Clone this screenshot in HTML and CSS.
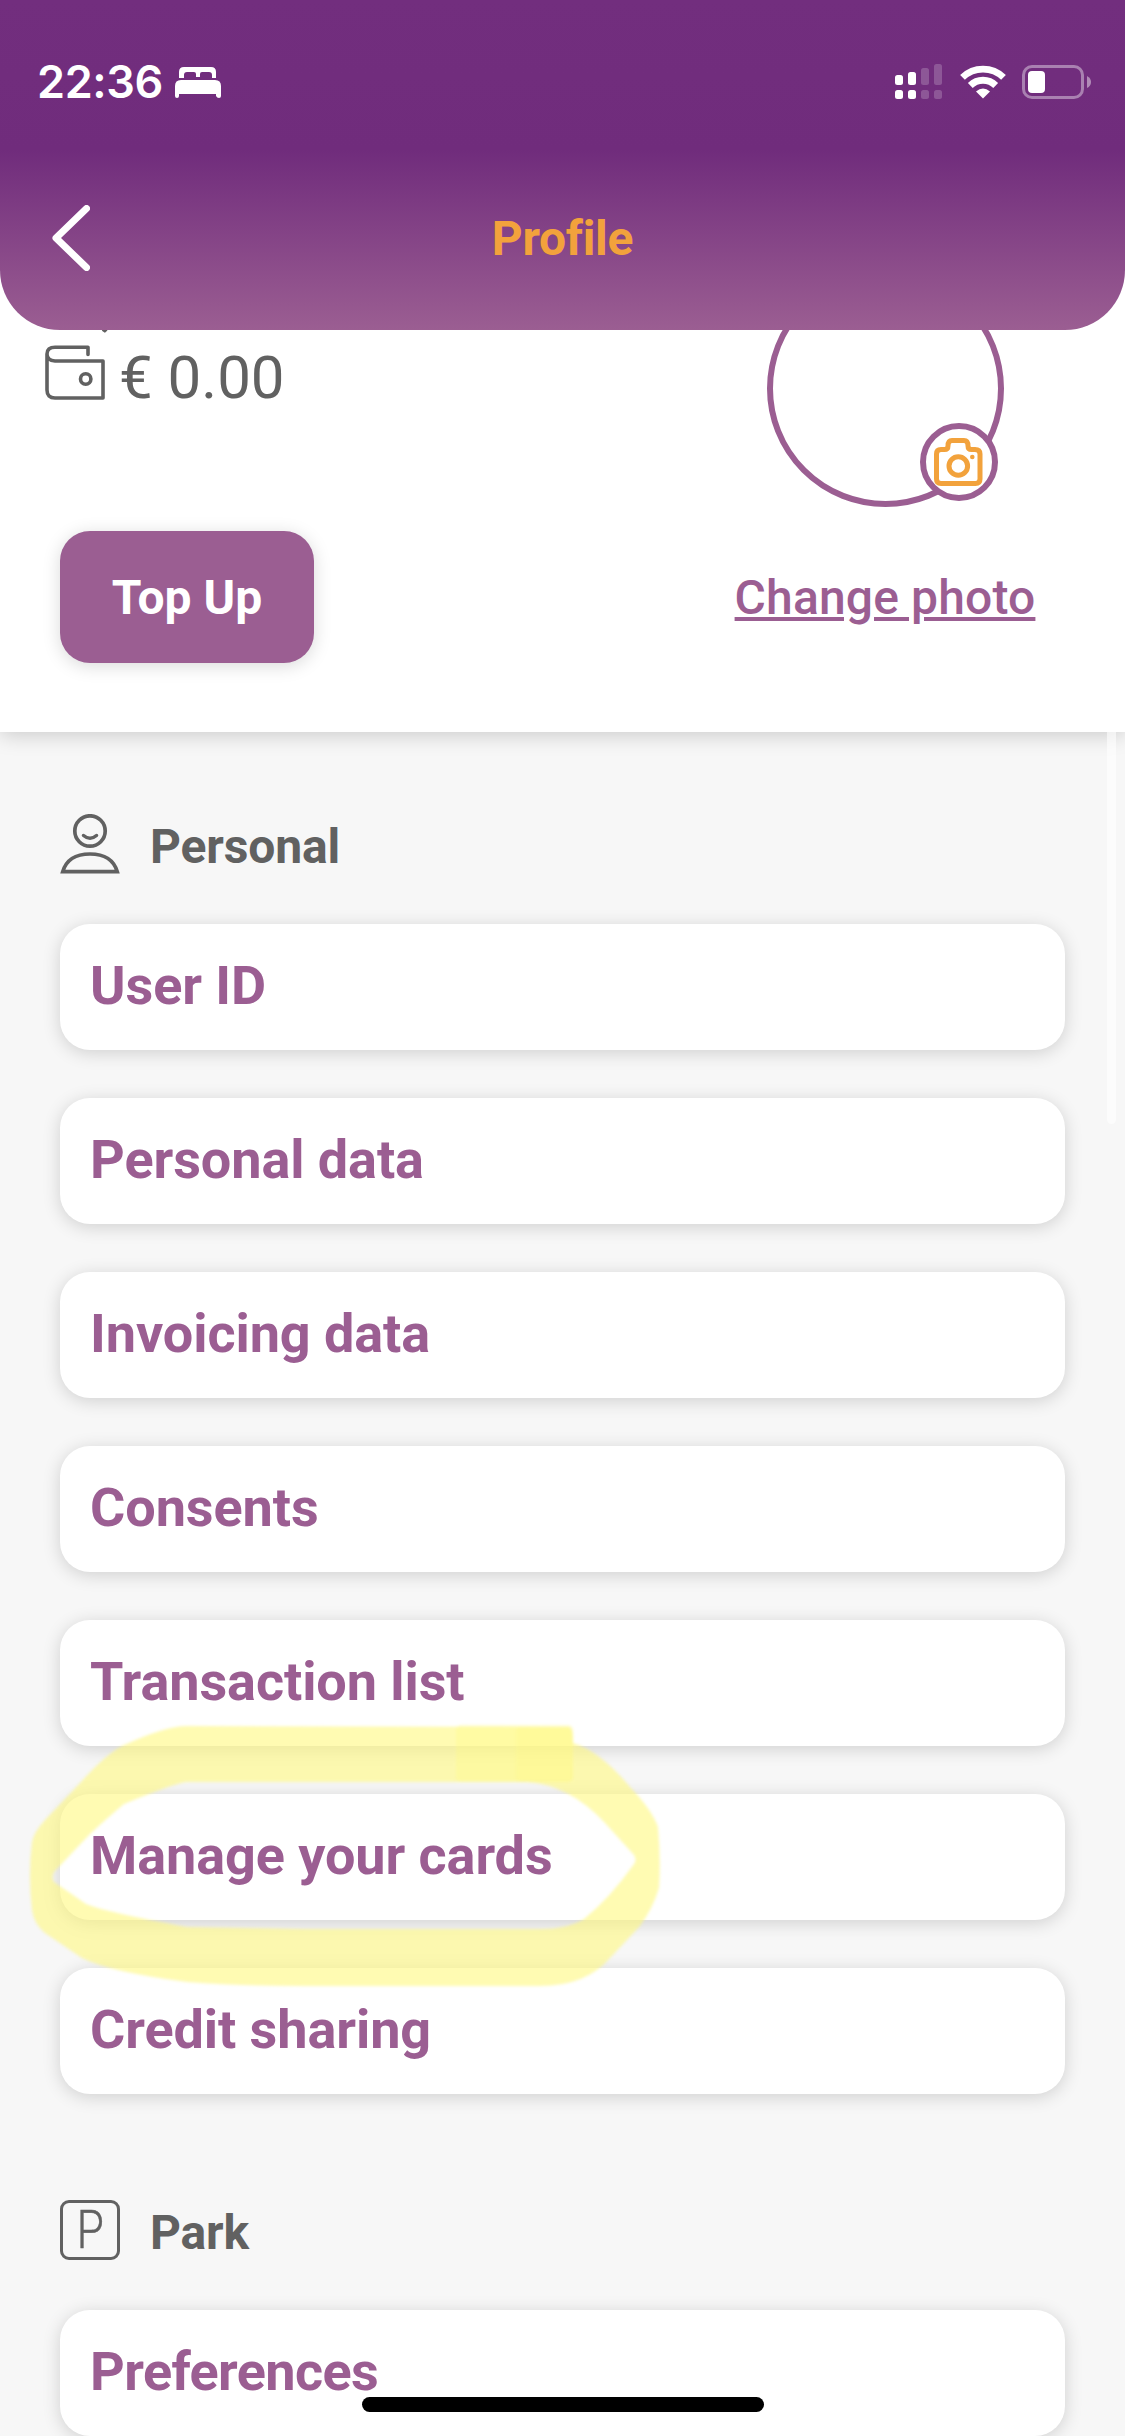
FILE: index.html
```html
<!DOCTYPE html>
<html lang="en">
<head>
<meta charset="utf-8">
<title>Profile</title>
<link rel="stylesheet" href="styles.css">
</head>
<body>
<div class="screen">
  <header class="header">
    <div class="status">
      <div class="status-left">
        <span class="time">22:36</span>
        <svg class="bed" width="46" height="32" viewBox="0 0 46 32" fill="#fff"><path d="M4 11V5Q4 0 9 0H36Q41 0 41 5V11H37V8Q37 5 34 5H27Q25 5 25 7V10H21V7Q21 5 19 5H12Q9 5 9 8V11Z"/><path d="M0 19Q0 13 6 13H40Q46 13 46 19V29Q46 31 44 31T41 29V27H4V29Q4 31 2 31T0 29Z"/></svg>
      </div>
      <div class="status-right">
        <svg width="47" height="36" viewBox="0 0 47 36" fill="#fff"><rect y="11" width="8" height="10" rx="2.5"/><rect x="13" y="8" width="8" height="13" rx="2.5"/><rect y="26" width="8" height="9" rx="2.5"/><rect x="13" y="26" width="8" height="9" rx="2.5"/><g opacity=".2"><rect x="26" y="4" width="8" height="17" rx="2.5"/><rect x="39" y="0" width="8" height="21" rx="2.5"/><rect x="26" y="26" width="8" height="9" rx="2.5"/><rect x="39" y="26" width="8" height="9" rx="2.5"/></g></svg>
        <svg class="wifi" width="46" height="34" viewBox="0 0 46 34" fill="none" stroke="#fff" stroke-width="6.8"><path d="M2.500 12.400A29.500 29.500 0 0 1 43.500 12.400"/><path d="M10.300 20.500A18 18 0 0 1 35.700 20.500"/><path d="M23 33.500L16 26.500Q23 20.500 30 26.500Z" fill="#fff" stroke="none"/></svg>
        <svg class="battery" width="70" height="34" viewBox="0 0 70 34"><rect x="1.500" y="1.500" width="59" height="31" rx="8.500" fill="none" stroke="#fff" stroke-opacity=".4" stroke-width="3"/><rect x="6" y="6" width="17" height="22" rx="4" fill="#fff"/><path d="M65 11Q69 13 69 17T65 23Z" fill="#fff" fill-opacity=".45"/></svg>
      </div>
    </div>
    <div class="navbar">
      <svg class="back" width="38" height="66" viewBox="0 0 38 66" fill="none" stroke="#fff" stroke-width="7" stroke-linecap="round" stroke-linejoin="round"><path d="M34.500 3.500L4 33L34.500 62.500"/></svg>
      <h1 class="title">Profile</h1>
      <span></span>
    </div>
  </header>

  <section class="profile">
    <div class="account">
      <div class="greeting">,</div>
      <div class="balance">
        <svg width="60" height="56" viewBox="0 0 60 56" fill="none" stroke="#616161" stroke-width="3.600" stroke-linejoin="round" stroke-linecap="round"><path d="M43 9.500V2.300H10Q2 2.300 2 9T10 16H58V53H10Q2 53 2 45V9"/><circle cx="40.700" cy="34" r="5.200"/></svg>
        <span class="amount">€ 0.00</span>
      </div>
      <button class="topup">Top Up</button>
    </div>
    <div class="photo">
      <div class="avatar">
        <div class="camera">
          <svg width="49" height="49" viewBox="0 0 49 49" fill="none" stroke="#f2a23c" stroke-width="5" stroke-linejoin="round"><path d="M2.500 16Q2.500 11.500 7 11.500H10.500Q14 11.500 14 8Q14 2.500 18 2.500H30Q34 2.500 34 8Q34 11.500 37.500 11.500H41Q46 11.500 46 16V41Q46 45.500 41.500 45.500H7Q2.500 45.500 2.500 41Z"/><circle cx="24.300" cy="28" r="9.300"/><circle cx="38.300" cy="19" r="2.300" fill="#f2a23c" stroke="none"/></svg>
        </div>
      </div>
      <a class="change">Change photo</a>
    </div>
  </section>

  <main class="content">
    <section class="group">
      <h2 class="heading">
        <svg width="60" height="60" viewBox="0 0 60 60" fill="none" stroke="#616161" stroke-width="3.700" stroke-linecap="round"><circle cx="30" cy="17" r="15.200"/><path d="M23.500 21.500Q30 27 36.500 21.500" stroke-width="3.500"/><path d="M2.700 57.700Q8 40 30 40T57.300 57.700Z" stroke-linecap="butt"/></svg>
        <span>Personal</span>
      </h2>
      <ul class="list">
        <li class="item">User ID</li>
        <li class="item">Personal data</li>
        <li class="item">Invoicing data</li>
        <li class="item">Consents</li>
        <li class="item">Transaction list</li>
        <li class="item">Manage your cards</li>
        <li class="item">Credit sharing</li>
      </ul>
    </section>
    <section class="group">
      <h2 class="heading">
        <i class="parking"><b class="parking-letter">P</b></i>
        <span>Park</span>
      </h2>
      <ul class="list">
        <li class="item tight">Preferences</li>
      </ul>
    </section>
  </main>

  <svg class="marker" width="660" height="290" viewBox="10 1710 660 290" fill="#fff97f">
    <path fill-rule="evenodd" opacity=".6" d="M187 1726L569 1727Q573 1729 573 1743Q600 1751 630 1787Q652 1810 658 1827Q661 1860 659 1888Q653 1908 640 1926L610 1958Q586 1986 540 1986H304Q240 1986 187 1982Q110 1972 82 1958L45 1933Q34 1924 32 1910Q28 1875 32 1842Q34 1832 45 1820L80 1783Q105 1755 122 1746Q165 1726 187 1726ZM187 1782Q175 1783 124 1804Q105 1820 90 1834L54 1872Q51 1878 54 1882L86 1904Q105 1912 187 1927L304 1929H540Q568 1929 584 1919Q610 1898 634 1864Q637 1860 634 1855L605 1823Q570 1785 527 1782Z"/>
    <rect x="456" y="1725" width="117" height="57" rx="5" opacity=".3"/>
    <rect x="516" y="1727" width="57" height="55" rx="5" opacity=".25"/>
  </svg>
  <div class="scrollbar"></div>
  <div class="home"></div>
</div>
</body>
</html>
```
FILE: styles.css
```css
* { box-sizing: border-box; }

body {
  margin: 0;
  font-family: Roboto, "Liberation Sans", sans-serif;
  background: #f7f7f7;
}

h1, h2, ul { margin: 0; padding: 0; }

svg { display: block; flex: none; }

.screen {
  position: relative;
  width: 1125px;
  height: 2436px;
  overflow: hidden;
  background: #f7f7f7;
}

.header {
  position: relative;
  z-index: 2;
  height: 330px;
  border-radius: 0 0 60px 60px;
  background: linear-gradient(#722e7e 0, #702c7c 150px, #9b5e92 330px);
}

.status {
  display: flex;
  justify-content: space-between;
  height: 150px;
  padding: 64px 33px 0 37px;
}

.status-left, .status-right { display: flex; align-items: flex-start; }

.time {
  width: 138px;
  margin-top: -10px;
  font: 600 45px/56px Inter, sans-serif;
  letter-spacing: -.4px;
  color: #fff;
  white-space: nowrap;
}

.bed { margin-top: 3px; }
.wifi { margin: 1px 0 0 18px; }
.battery { margin: 1px 0 0 16px; }

.navbar {
  display: grid;
  grid-template-columns: 1fr auto 1fr;
  align-items: center;
  height: 176px;
  padding: 0 52px;
}

.title {
  font-size: 48px;
  font-weight: bold;
  letter-spacing: -.3px;
  color: #f2a23c;
}

.profile {
  position: relative;
  z-index: 1;
  display: flex;
  justify-content: space-between;
  height: 462px;
  margin-top: -60px;
  background: #fff;
  box-shadow: 0 3px 20px rgba(0, 0, 0, .18);
}

.account {
  display: flex;
  flex-direction: column;
  align-items: flex-start;
  padding-left: 45px;
  color: #616161;
  font-size: 60px;
}

.greeting { height: 70px; padding-left: 56px; line-height: 68px; }

.balance {
  display: flex;
  align-items: center;
  gap: 14px;
  height: 66px;
}

.amount { padding-top: 9px; }

.topup {
  width: 254px;
  height: 132px;
  margin: 125px 0 0 15px;
  border: 0;
  border-radius: 30px;
  background: #9b5e92;
  box-shadow: 0 3px 18px rgba(0, 0, 0, .15);
  font: bold 48px Roboto, sans-serif;
  color: #fff;
}

.photo {
  display: flex;
  flex-direction: column;
  align-items: center;
  width: 300px;
  margin-right: 90px;
}

.avatar {
  position: relative;
  width: 237px;
  height: 237px;
  border: 6px solid #9b5e92;
  border-radius: 50%;
}

.camera {
  position: absolute;
  right: 0;
  bottom: 0;
  display: flex;
  align-items: center;
  justify-content: center;
  width: 78px;
  height: 78px;
  border: 6px solid #9b5e92;
  border-radius: 50%;
  background: #fff;
}

.change {
  margin-top: 63px;
  font-size: 48px;
  font-weight: 500;
  letter-spacing: .15px;
  line-height: 56px;
  color: #9b5e92;
  text-decoration: underline;
  white-space: nowrap;
}

.content {
  display: flex;
  flex-direction: column;
  gap: 106px;
  padding: 82px 60px 0;
}

.heading {
  display: flex;
  gap: 30px;
  height: 60px;
  margin-bottom: 50px;
  font-size: 48px;
  font-weight: bold;
  letter-spacing: -.15px;
  line-height: 66px;
  color: #616161;
}

.parking {
  display: flex;
  justify-content: center;
  width: 60px;
  height: 60px;
  border: 3px solid #616161;
  border-radius: 9px;
  font-style: normal;
}

.parking-letter {
  font-size: 53px;
  font-weight: 300;
  line-height: 54px;
  transform: scaleX(.83);
  -webkit-text-stroke: .5px #616161;
}

.list {
  display: flex;
  flex-direction: column;
  gap: 48px;
  list-style: none;
}

.item {
  display: flex;
  align-items: center;
  height: 126px;
  padding: 0 30px 3px;
  border-radius: 30px;
  background: #fff;
  box-shadow: 0 3px 18px rgba(0, 0, 0, .16);
  font-size: 54px;
  font-weight: bold;
  letter-spacing: -.08px;
  color: #9b5e92;
}

.tight { letter-spacing: -.6px; }

.marker {
  position: absolute;
  left: 10px;
  top: 1710px;
  filter: blur(1.5px);
}

.scrollbar {
  position: absolute;
  z-index: 1;
  left: 1107px;
  top: 600px;
  width: 9px;
  height: 524px;
  border-radius: 5px;
  background: rgba(255, 255, 255, .6);
}

.home {
  position: absolute;
  left: 362px;
  top: 2397px;
  width: 402px;
  height: 15px;
  border-radius: 8px;
  background: #000;
}
```
